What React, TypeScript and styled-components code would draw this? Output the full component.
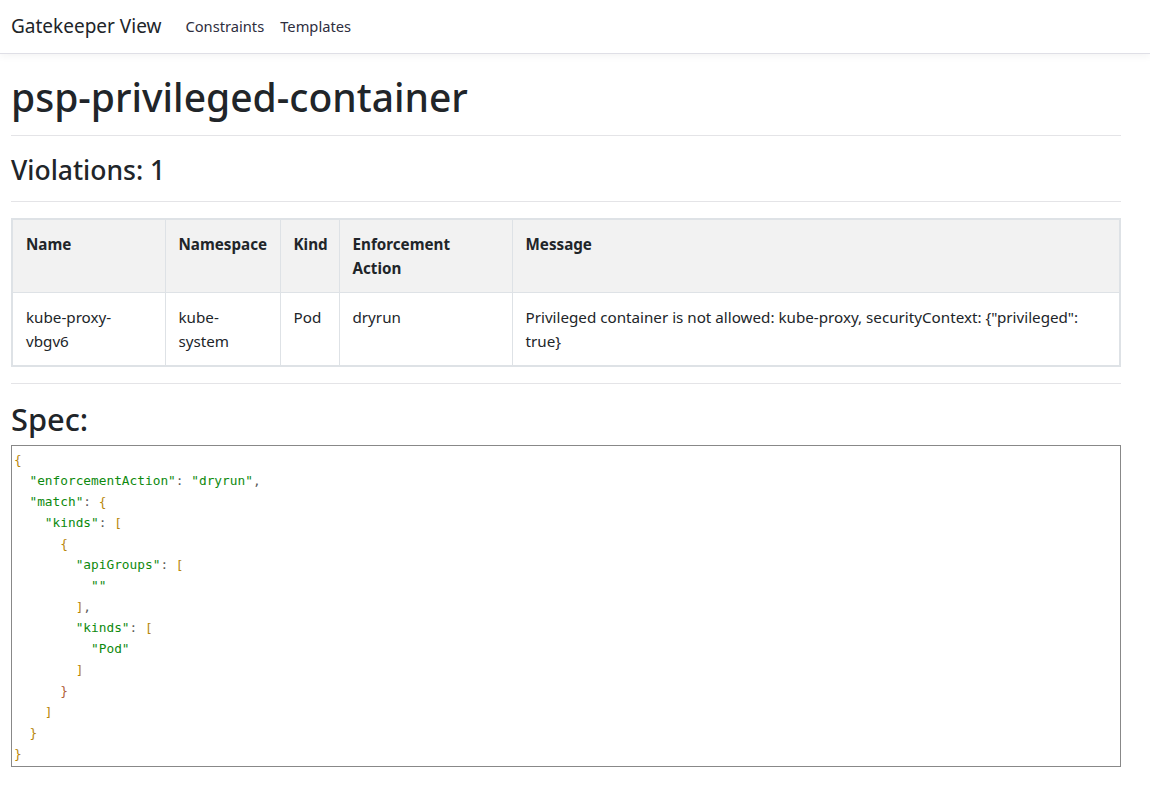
import React from "react";
import styled, { createGlobalStyle } from "styled-components";

const GlobalStyle = createGlobalStyle`
  html, body { margin: 0; padding: 0; background: #fff; }
  body {
    font-family: "Noto Sans", "Open Sans", "Liberation Sans", sans-serif;
    font-size: 16px;
    line-height: 1.5;
    color: #212529;
  }
  * { box-sizing: border-box; }
`;

const NavBar = styled.nav`
  height: 54px;
  display: flex;
  align-items: center;
  padding: 0 11px;
  border-bottom: 1px solid #dfdfe6;
  box-shadow: 0 2px 8px rgba(0, 0, 0, 0.05);
  gap: 24px;
`;

const Brand = styled.span`
  font-size: 19px;
  color: #212529;
`;

const NavLinks = styled.div`
  display: flex;
  gap: 16px;
`;

const NavLink = styled.a`
  font-size: 14.7px;
  color: #2e2e3e;
  text-decoration: none;
`;

const Main = styled.main`
  width: 1110px;
  margin-left: 11px;
  padding-top: 20px;
  padding-bottom: 40px;
`;

const Title = styled.h1`
  font-size: 39px;
  font-weight: 500;
  line-height: 1.2;
  margin: 0;
`;

const SubTitle = styled.h2<{ $size: number; $gap?: number }>`
  font-size: ${(p) => p.$size}px;
  font-weight: 500;
  line-height: 1.2;
  margin: 0 0 ${(p) => p.$gap || 0}px;
`;

const Rule = styled.hr<{ $top: number; $bottom: number }>`
  border: 0;
  border-top: 1px solid #e4e4e7;
  margin: ${(p) => p.$top}px 0 ${(p) => p.$bottom}px;
`;

const Table = styled.table`
  width: 100%;
  table-layout: fixed;
  border-collapse: collapse;
  border: 2px solid #dee2e6;
  font-size: 15.2px;
`;

const Col = styled.col<{ $w: number }>`
  width: ${(p) => p.$w}px;
`;

const HeadCell = styled.th`
  text-align: left;
  vertical-align: top;
  font-weight: 700;
  background: #f2f2f2;
  border: 1px solid #dee2e6;
  padding: 12px 20px 12px 13px;
  line-height: 24px;
  height: 74px;
`;

const Cell = styled.td`
  text-align: left;
  vertical-align: top;
  border: 1px solid #dee2e6;
  padding: 12px 20px 12px 13px;
  line-height: 24px;
  height: 73px;
`;

const Pre = styled.pre`
  margin: 0;
  border: 1px solid #888;
  padding: 3px 2px 2px;
  font-family: "DejaVu Sans Mono", "Liberation Mono", monospace;
  font-size: 12.8px;
  line-height: 21px;
  color: #555;
  white-space: pre;
`;

const Str = styled.span`
  color: #0e8a0e;
`;

const Punc = styled.span<{ $c?: string }>`
  color: ${(p) => p.$c || "#b8860b"};
`;

const Plain = styled.span`
  color: #5a5a5a;
`;

type Tok = [string, "s" | "p" | "t" | "r"];

const lines: Tok[][] = [
  [["{", "p"]],
  [["  ", "t"], ['"enforcementAction"', "s"], [": ", "t"], ['"dryrun"', "s"], [",", "t"]],
  [["  ", "t"], ['"match"', "s"], [": ", "t"], ["{", "p"]],
  [["    ", "t"], ['"kinds"', "s"], [": ", "t"], ["[", "p"]],
  [["      ", "t"], ["{", "p"]],
  [["        ", "t"], ['"apiGroups"', "s"], [": ", "t"], ["[", "p"]],
  [["          ", "t"], ['""', "s"]],
  [["        ", "t"], ["]", "p"], [",", "t"]],
  [["        ", "t"], ['"kinds"', "s"], [": ", "t"], ["[", "p"]],
  [["          ", "t"], ['"Pod"', "s"]],
  [["        ", "t"], ["]", "p"]],
  [["      ", "t"], ["}", "r"]],
  [["    ", "t"], ["]", "p"]],
  [["  ", "t"], ["}", "p"]],
  [["}", "p"]],
];

const message =
  'Privileged container is not allowed: kube-proxy, securityContext: {"privileged": true}';

const renderTok = (t: Tok, i: number) => {
  if (t[1] === "s") return <Str key={i}>{t[0]}</Str>;
  if (t[1] === "p") return <Punc key={i}>{t[0]}</Punc>;
  if (t[1] === "r") return <Punc key={i} $c="#b0603a">{t[0]}</Punc>;
  return <Plain key={i}>{t[0]}</Plain>;
};

export default function App() {
  return (
    <>
      <GlobalStyle />
      <NavBar>
        <Brand>Gatekeeper View</Brand>
        <NavLinks>
          <NavLink href="#">Constraints</NavLink>
          <NavLink href="#">Templates</NavLink>
        </NavLinks>
      </NavBar>
      <Main>
        <Title>psp-privileged-container</Title>
        <Rule $top={14} $bottom={19} />
        <SubTitle $size={26.5}>Violations: 1</SubTitle>
        <Rule $top={14} $bottom={16} />
        <Table>
          <colgroup>
            <Col $w={153} />
            <Col $w={115} />
            <Col $w={59} />
            <Col $w={173} />
            <col />
          </colgroup>
          <thead>
            <tr>
              <HeadCell>Name</HeadCell>
              <HeadCell>Namespace</HeadCell>
              <HeadCell>Kind</HeadCell>
              <HeadCell>Enforcement Action</HeadCell>
              <HeadCell>Message</HeadCell>
            </tr>
          </thead>
          <tbody>
            <tr>
              <Cell>kube-proxy-vbgv6</Cell>
              <Cell>kube-system</Cell>
              <Cell>Pod</Cell>
              <Cell>dryrun</Cell>
              <Cell>{message}</Cell>
            </tr>
          </tbody>
        </Table>
        <Rule $top={16} $bottom={17} />
        <SubTitle $size={30.8} $gap={7}>Spec:</SubTitle>
        <Pre>
          {lines.map((l, i) => (
            <div key={i}>{l.map(renderTok)}</div>
          ))}
        </Pre>
      </Main>
    </>
  );
}
